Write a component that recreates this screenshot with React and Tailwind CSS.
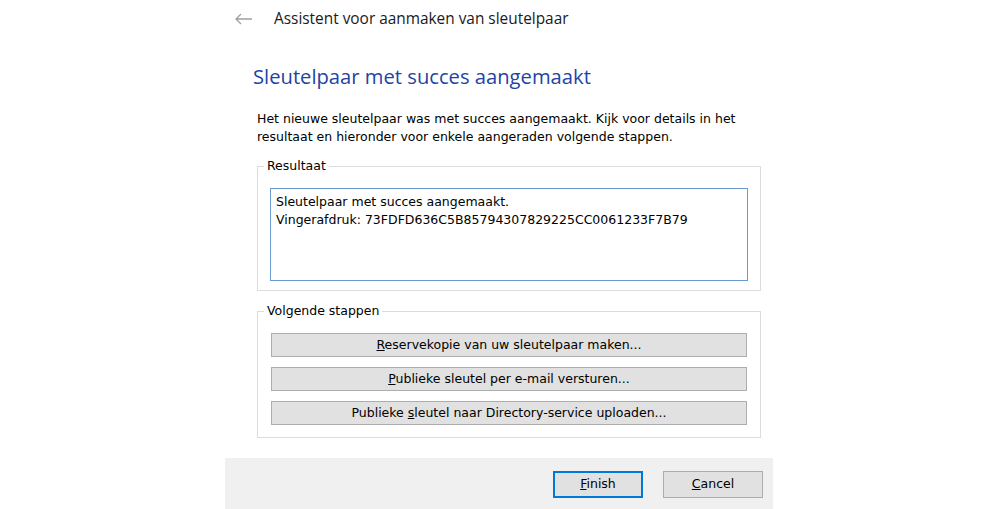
import React from "react";

const tahoma = { fontFamily: '"DejaVu Sans", "Liberation Sans", sans-serif' };

function Btn({ children, className = "" }) {
  return (
    <button
      className={`h-[24px] w-full bg-[#e1e1e1] border border-[#adadad] text-[12.5px] text-black ${className}`}
      style={tahoma}
    >
      {children}
    </button>
  );
}

export default function App() {
  return (
    <div className="w-[1000px] h-[509px] bg-white flex justify-center overflow-hidden">
      <div className="w-[548px] ml-[-2px] flex flex-col" style={{ fontFamily: '"Open Sans", "Noto Sans", sans-serif' }}>
        <div className="h-[40px] flex items-center pl-[10px]">
          <svg width="18" height="12" viewBox="0 0 18 12" className="mt-[-3px]">
            <path d="M1 6 H17 M6 1 L1 6 L6 11" fill="none" stroke="#a0a0a0" strokeWidth="1.3" />
          </svg>
          <span className="ml-[21px] text-[15.4px] text-[#1a1a1a] mt-[-2px]">Assistent voor aanmaken van sleutelpaar</span>
        </div>
        <div className="flex-1 flex flex-col pl-[32px] pr-[12px]">
          <div className="mt-[22px] ml-[-4px] text-[20.2px] leading-[28px] text-[#1e44a4]">
            Sleutelpaar met succes aangemaakt
          </div>
          <p className="mt-[20px] text-[12.5px] leading-[18px] text-black" style={tahoma}>
            Het nieuwe sleutelpaar was met succes aangemaakt. Kijk voor details in het resultaat en hieronder voor enkele aangeraden volgende stappen.
          </p>
          <fieldset className="mt-[12px] border border-[#dcdcdc] px-[12px] pb-[9px] pt-[14px] min-w-0" style={tahoma}>
            <legend className="ml-[-6px] px-[3px] text-[12.5px] leading-[16px] text-black">Resultaat</legend>
            <div className="h-[93px] border border-[#6a9cd0] px-[5px] pt-[4px] text-[12.5px] leading-[18px] text-black">
              <div>Sleutelpaar met succes aangemaakt.</div>
              <div>Vingerafdruk: 73FDFD636C5B85794307829225CC0061233F7B79</div>
            </div>
          </fieldset>
          <fieldset className="mt-[12px] border border-[#dcdcdc] px-[13px] pb-[12px] pt-[14px] min-w-0" style={tahoma}>
            <legend className="ml-[-7px] px-[3px] text-[12.5px] leading-[16px] text-black">Volgende stappen</legend>
            <div className="flex flex-col gap-[10px]">
              <Btn><span className="underline">R</span>eservekopie van uw sleutelpaar maken...</Btn>
              <Btn><span className="underline">P</span>ublieke sleutel per e-mail versturen...</Btn>
              <Btn>Publieke <span className="underline">s</span>leutel naar Directory-service uploaden...</Btn>
            </div>
          </fieldset>
        </div>
        <div className="h-[51px] bg-[#f0f0f0] flex items-center justify-end gap-[20px] pr-[10px] pt-[2px]">
          <button className="w-[90px] h-[27px] bg-[#e1e1e1] border-2 border-[#0078d7] text-[12.5px] text-black" style={tahoma}>
            <span className="underline">F</span>inish
          </button>
          <button className="w-[100px] h-[27px] bg-[#e1e1e1] border border-[#adadad] text-[12.5px] text-black" style={tahoma}>
            <span className="underline">C</span>ancel
          </button>
        </div>
      </div>
    </div>
  );
}
